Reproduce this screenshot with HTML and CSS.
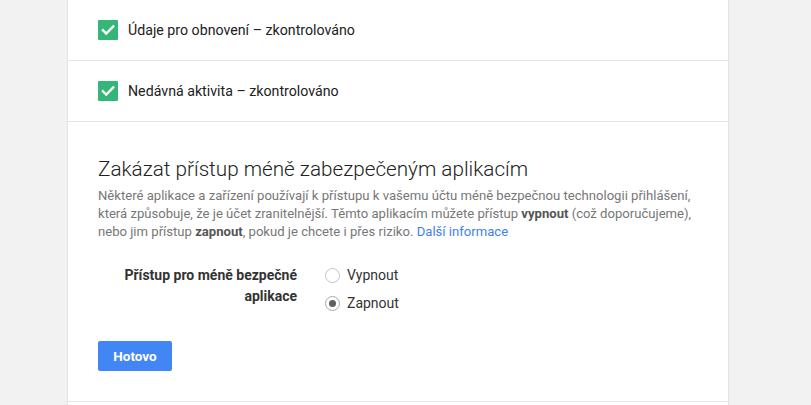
FILE: index.html
```html
<!DOCTYPE html>
<html lang="cs">
<head>
<meta charset="utf-8">
<title>Zabezpečení</title>
<link rel="stylesheet" href="styles.css">
</head>
<body>
<div class="card">
  <div class="check-row">
    <span class="checkbox"><svg viewBox="0 0 20 20" width="20" height="20"><path d="M5 10.3l3.2 3.2L15.2 6.5" fill="none" stroke="#fff" stroke-width="2.4" stroke-linecap="square"/></svg></span>
    <span class="check-text">Údaje pro obnovení – zkontrolováno</span>
  </div>
  <div class="check-row">
    <span class="checkbox"><svg viewBox="0 0 20 20" width="20" height="20"><path d="M5 10.3l3.2 3.2L15.2 6.5" fill="none" stroke="#fff" stroke-width="2.4" stroke-linecap="square"/></svg></span>
    <span class="check-text">Nedávná aktivita – zkontrolováno</span>
  </div>
  <div class="section">
    <h2 class="title">Zakázat přístup méně zabezpečeným aplikacím</h2>
    <p class="desc">Některé aplikace a zařízení používají k přístupu k vašemu účtu méně bezpečnou technologii přihlášení, která způsobuje, že je účet zranitelnější. Těmto aplikacím můžete přístup <b>vypnout</b> (což doporučujeme), nebo jim přístup <b>zapnout</b>, pokud je chcete i přes riziko. <a href="#" class="link">Další informace</a></p>
    <div class="form-row">
      <div class="form-label">Přístup pro méně bezpečné aplikace</div>
      <div class="options">
        <label class="option"><span class="radio"></span><span>Vypnout</span></label>
        <label class="option"><span class="radio checked"></span><span>Zapnout</span></label>
      </div>
    </div>
    <button class="btn" type="button">Hotovo</button>
  </div>
</div>
</body>
</html>
```
FILE: styles.css
```css
html, body {
  margin: 0;
  padding: 0;
}
body {
  background: #f2f2f2;
  font-family: Roboto, "Liberation Sans", Arial, sans-serif;
  color: #212121;
  height: 405px;
  overflow: hidden;
}
.card {
  margin-left: 67px;
  width: 660px;
  background: #fff;
  border-left: 1px solid #e3e3e3;
  border-right: 1px solid #e3e3e3;
  min-height: 405px;
}
.check-row {
  height: 60px;
  border-bottom: 1px solid #e5e5e5;
  display: flex;
  align-items: center;
  padding-left: 30px;
  gap: 10px;
}
.checkbox {
  width: 20px;
  height: 20px;
  background: #34b679;
  border-radius: 1px;
  display: flex;
}
.check-text {
  font-size: 14.2px;
  color: #212121;
}
.section {
  padding: 33px 30px 30px 30px;
  border-bottom: 1px solid #e5e5e5;
}
.title {
  margin: 0 0 4px 0;
  font-size: 20.7px;
  font-weight: 300;
  line-height: 28px;
  color: #222;
}
.desc {
  margin: 0;
  font-size: 13.1px;
  line-height: 18px;
  color: #777;
}
.desc b {
  color: #555;
  font-weight: 700;
}
.link {
  color: #427fed;
  text-decoration: none;
}
.form-row {
  display: flex;
  gap: 28px;
  margin-top: 24px;
}
.form-label {
  width: 199px;
  text-align: right;
  font-size: 14px;
  font-weight: 700;
  line-height: 21px;
  color: #333;
}
.options {
  display: flex;
  flex-direction: column;
  gap: 7px;
}
.option {
  display: flex;
  align-items: center;
  gap: 7px;
  font-size: 14px;
  line-height: 21px;
  color: #333;
}
.radio {
  box-sizing: border-box;
  width: 15px;
  height: 15px;
  border-radius: 50%;
  border: 1px solid #c4c4c4;
  background: #fff;
  display: flex;
  align-items: center;
  justify-content: center;
  margin-top: -1px;
}
.radio.checked {
  border-color: #a8a8a8;
}
.radio.checked::after {
  content: "";
  width: 7px;
  height: 7px;
  border-radius: 50%;
  background: #5f5f5f;
}
.btn {
  margin-top: 27px;
  width: 74px;
  height: 30px;
  border: none;
  border-radius: 2px;
  background: #4285f4;
  color: #fff;
  font-family: Roboto, "Liberation Sans", Arial, sans-serif;
  font-size: 13.5px;
  font-weight: 700;
  padding: 0;
  display: block;
}
```
